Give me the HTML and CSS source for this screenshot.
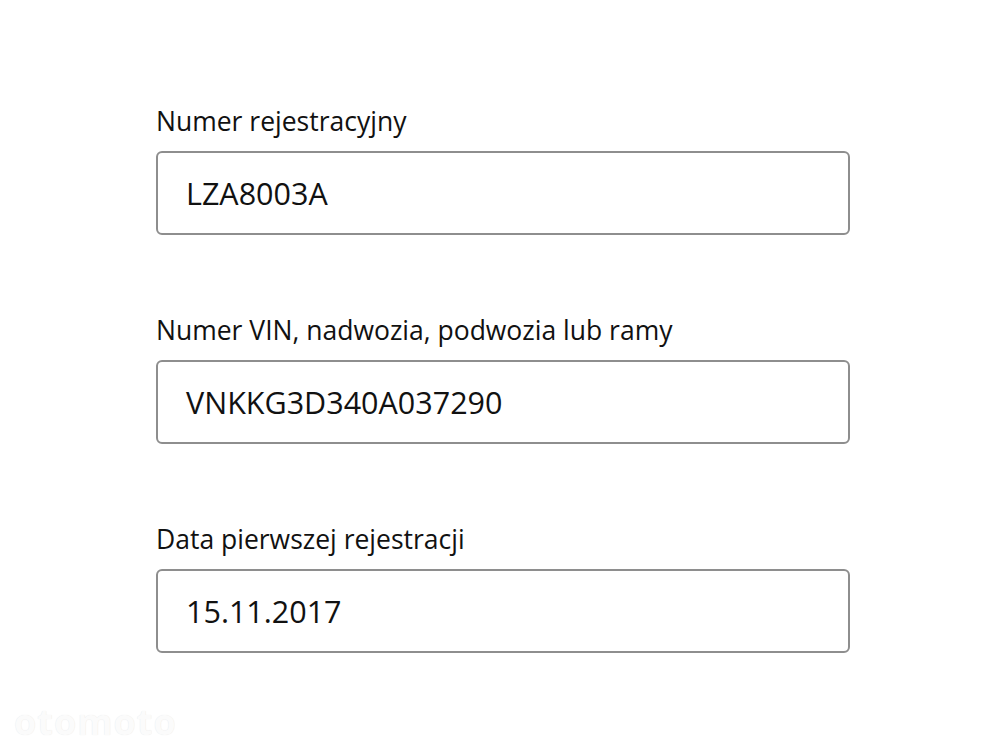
FILE: index.html
```html
<!DOCTYPE html>
<html lang="pl">
<head>
<meta charset="utf-8">
<title>Dane pojazdu</title>
<link rel="stylesheet" href="styles.css">
</head>
<body>
<main class="form">
  <div class="field">
    <div class="label">Numer rejestracyjny</div>
    <div class="box">LZA8003A</div>
  </div>
  <div class="field">
    <div class="label">Numer VIN, nadwozia, podwozia lub ramy</div>
    <div class="box">VNKKG3D340A037290</div>
  </div>
  <div class="field">
    <div class="label">Data pierwszej rejestracji</div>
    <div class="box">15.11.2017</div>
  </div>
</main>
<div class="watermark">otomoto</div>
</body>
</html>
```
FILE: styles.css
```css
html, body {
  margin: 0;
  padding: 0;
  background: #ffffff;
}
body {
  width: 1000px;
  height: 750px;
  overflow: hidden;
  position: relative;
  font-family: "Open Sans", "Noto Sans", sans-serif;
  color: #111111;
}
.form {
  display: flex;
  flex-direction: column;
  gap: 78px;
  padding: 104px 0 0 156px;
  width: 694px;
}
.field {
  display: flex;
  flex-direction: column;
  gap: 13px;
}
.label {
  font-size: 26.5px;
  line-height: 34px;
}
.box {
  box-sizing: border-box;
  height: 84px;
  border: 2px solid #8e8e8e;
  border-radius: 6px;
  display: flex;
  align-items: center;
  padding-left: 28px;
  font-size: 30.5px;
}
.watermark {
  position: absolute;
  left: 14px;
  bottom: 4px;
  font-family: "Open Sans", sans-serif;
  font-weight: 700;
  font-size: 36px;
  letter-spacing: 1px;
  color: #fbfbfb;
  text-shadow: 0 0 1px #e4e4e4;
}
```
